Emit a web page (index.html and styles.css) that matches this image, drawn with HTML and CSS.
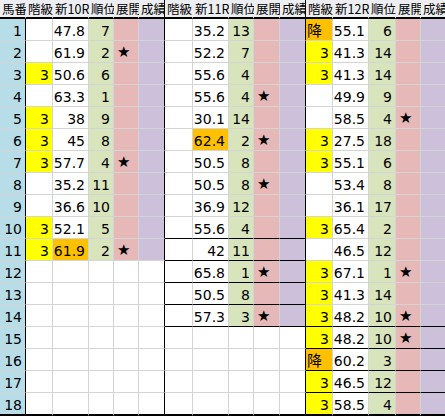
FILE: index.html
```html
<!DOCTYPE html>
<html lang="ja">
<head>
<meta charset="utf-8">
<title>新R</title>
<link rel="stylesheet" href="styles.css">
</head>
<body>
<div class="sheet">
  <div class="c h">馬番</div>
  <div class="c h">階級</div><div class="c h">新10R</div><div class="c h">順位</div><div class="c h">展開</div><div class="c h e">成績</div>
  <div class="c h">階級</div><div class="c h">新11R</div><div class="c h">順位</div><div class="c h">展開</div><div class="c h e">成績</div>
  <div class="c h">階級</div><div class="c h">新12R</div><div class="c h">順位</div><div class="c h">展開</div><div class="c h e">成績</div>

  <div class="c n">1</div>
  <div class="c"></div><div class="c">47.8</div><div class="c g">7</div><div class="c p"></div><div class="c v e"></div>
  <div class="c"></div><div class="c">35.2</div><div class="c g">13</div><div class="c p"></div><div class="c v e"></div>
  <div class="c o l">降</div><div class="c">55.1</div><div class="c g">6</div><div class="c p"></div><div class="c v e"></div>

  <div class="c n">2</div>
  <div class="c"></div><div class="c">61.9</div><div class="c g">2</div><div class="c p s">★</div><div class="c v e"></div>
  <div class="c"></div><div class="c">52.2</div><div class="c g">7</div><div class="c p"></div><div class="c v e"></div>
  <div class="c y">3</div><div class="c">41.3</div><div class="c g">14</div><div class="c p"></div><div class="c v e"></div>

  <div class="c n">3</div>
  <div class="c y">3</div><div class="c">50.6</div><div class="c g">6</div><div class="c p"></div><div class="c v e"></div>
  <div class="c"></div><div class="c">55.6</div><div class="c g">4</div><div class="c p"></div><div class="c v e"></div>
  <div class="c y">3</div><div class="c">41.3</div><div class="c g">14</div><div class="c p"></div><div class="c v e"></div>

  <div class="c n">4</div>
  <div class="c"></div><div class="c">63.3</div><div class="c g">1</div><div class="c p"></div><div class="c v e"></div>
  <div class="c"></div><div class="c">55.6</div><div class="c g">4</div><div class="c p s">★</div><div class="c v e"></div>
  <div class="c"></div><div class="c">49.9</div><div class="c g">9</div><div class="c p"></div><div class="c v e"></div>

  <div class="c n">5</div>
  <div class="c y">3</div><div class="c">38</div><div class="c g">9</div><div class="c p"></div><div class="c v e"></div>
  <div class="c"></div><div class="c">30.1</div><div class="c g">14</div><div class="c p"></div><div class="c v e"></div>
  <div class="c"></div><div class="c">58.5</div><div class="c g">4</div><div class="c p s">★</div><div class="c v e"></div>

  <div class="c n">6</div>
  <div class="c y">3</div><div class="c">45</div><div class="c g">8</div><div class="c p"></div><div class="c v e"></div>
  <div class="c"></div><div class="c o">62.4</div><div class="c g">2</div><div class="c p s">★</div><div class="c v e"></div>
  <div class="c y">3</div><div class="c">27.5</div><div class="c g">18</div><div class="c p"></div><div class="c v e"></div>

  <div class="c n">7</div>
  <div class="c y">3</div><div class="c">57.7</div><div class="c g">4</div><div class="c p s">★</div><div class="c v e"></div>
  <div class="c"></div><div class="c">50.5</div><div class="c g">8</div><div class="c p"></div><div class="c v e"></div>
  <div class="c y">3</div><div class="c">55.1</div><div class="c g">6</div><div class="c p"></div><div class="c v e"></div>

  <div class="c n">8</div>
  <div class="c"></div><div class="c">35.2</div><div class="c g">11</div><div class="c p"></div><div class="c v e"></div>
  <div class="c"></div><div class="c">50.5</div><div class="c g">8</div><div class="c p s">★</div><div class="c v e"></div>
  <div class="c"></div><div class="c">53.4</div><div class="c g">8</div><div class="c p"></div><div class="c v e"></div>

  <div class="c n">9</div>
  <div class="c"></div><div class="c">36.6</div><div class="c g">10</div><div class="c p"></div><div class="c v e"></div>
  <div class="c"></div><div class="c">36.9</div><div class="c g">12</div><div class="c p"></div><div class="c v e"></div>
  <div class="c"></div><div class="c">36.1</div><div class="c g">17</div><div class="c p"></div><div class="c v e"></div>

  <div class="c n">10</div>
  <div class="c y">3</div><div class="c">52.1</div><div class="c g">5</div><div class="c p"></div><div class="c v e"></div>
  <div class="c k"></div><div class="c k">55.6</div><div class="c g k">4</div><div class="c p k"></div><div class="c v e k"></div>
  <div class="c y">3</div><div class="c">65.4</div><div class="c g">2</div><div class="c p"></div><div class="c v e"></div>

  <div class="c n">11</div>
  <div class="c y">3</div><div class="c o">61.9</div><div class="c g">2</div><div class="c p s">★</div><div class="c v e"></div>
  <div class="c k"></div><div class="c k">42</div><div class="c g k">11</div><div class="c p k"></div><div class="c v e k"></div>
  <div class="c"></div><div class="c">46.5</div><div class="c g">12</div><div class="c p"></div><div class="c v e"></div>

  <div class="c n">12</div>
  <div class="c"></div><div class="c"></div><div class="c"></div><div class="c"></div><div class="c e"></div>
  <div class="c k"></div><div class="c k">65.8</div><div class="c g k">1</div><div class="c p s k">★</div><div class="c v e k"></div>
  <div class="c y">3</div><div class="c">67.1</div><div class="c g">1</div><div class="c p s">★</div><div class="c v e"></div>

  <div class="c n">13</div>
  <div class="c"></div><div class="c"></div><div class="c"></div><div class="c"></div><div class="c e"></div>
  <div class="c k"></div><div class="c k">50.5</div><div class="c g k">8</div><div class="c p k"></div><div class="c v e k"></div>
  <div class="c y">3</div><div class="c">41.3</div><div class="c g">14</div><div class="c p"></div><div class="c v e"></div>

  <div class="c n">14</div>
  <div class="c"></div><div class="c"></div><div class="c"></div><div class="c"></div><div class="c e"></div>
  <div class="c k"></div><div class="c k">57.3</div><div class="c g k">3</div><div class="c p s k">★</div><div class="c v e k"></div>
  <div class="c y k">3</div><div class="c k">48.2</div><div class="c g k">10</div><div class="c p s k">★</div><div class="c v e k"></div>

  <div class="c n">15</div>
  <div class="c"></div><div class="c"></div><div class="c"></div><div class="c"></div><div class="c e"></div>
  <div class="c"></div><div class="c"></div><div class="c"></div><div class="c"></div><div class="c e"></div>
  <div class="c y k">3</div><div class="c k">48.2</div><div class="c g k">10</div><div class="c p s k">★</div><div class="c v e k"></div>

  <div class="c n">16</div>
  <div class="c"></div><div class="c"></div><div class="c"></div><div class="c"></div><div class="c e"></div>
  <div class="c"></div><div class="c"></div><div class="c"></div><div class="c"></div><div class="c e"></div>
  <div class="c o l k">降</div><div class="c k">60.2</div><div class="c g k">3</div><div class="c p k"></div><div class="c v e k"></div>

  <div class="c n">17</div>
  <div class="c"></div><div class="c"></div><div class="c"></div><div class="c"></div><div class="c e"></div>
  <div class="c"></div><div class="c"></div><div class="c"></div><div class="c"></div><div class="c e"></div>
  <div class="c y k">3</div><div class="c k">46.5</div><div class="c g k">12</div><div class="c p k"></div><div class="c v e k"></div>

  <div class="c n b">18</div>
  <div class="c b"></div><div class="c b"></div><div class="c b"></div><div class="c b"></div><div class="c e b"></div>
  <div class="c b"></div><div class="c b"></div><div class="c b"></div><div class="c b"></div><div class="c e b"></div>
  <div class="c y b">3</div><div class="c b">58.5</div><div class="c g b">4</div><div class="c p b"></div><div class="c v e b"></div>
</div>
</body>
</html>
```

FILE: styles.css
```css
html, body {
  margin: 0;
  padding: 0;
  background: #ffffff;
}

.sheet {
  display: grid;
  grid-template-columns: 26px 27px 36px 25px 25px 26px 28px 36px 25px 26px 26px 27px 36px 27px 25px 25px;
  grid-template-rows: 19px repeat(17, 22px) 23px;
  width: 446px;
  font-family: "DejaVu Sans", "Noto Sans CJK JP", sans-serif;
  font-size: 14px;
  color: #000000;
}

.c {
  box-sizing: border-box;
  border-right: 1px solid #d4d4d4;
  border-bottom: 1px solid #d4d4d4;
  padding: 3px 3px 0 0;
  line-height: 18px;
  text-align: right;
  white-space: nowrap;
  overflow: hidden;
  background: #ffffff;
}

.h {
  background: #eceef2;
  border-right-color: #eceef2;
  border-bottom: 2px solid #000000;
  font-family: "Noto Sans CJK JP", sans-serif;
  font-size: 12.5px;
  line-height: 17px;
  padding: 0 0 0 2px;
  text-align: left;
  overflow: visible;
}

.n {
  background: #b7dee8;
  border-right-color: #000000;
}

.e { border-right-color: #000000; }
.k { border-bottom-color: #000000; }
.b { border-bottom: 2px solid #000000; }

.y { background: #ffff00; }
.o { background: #ffc000; }
.g { background: #d8e4bc; }
.p { background: #e6b8b7; }
.v { background: #ccc0da; }

.l {
  text-align: left;
  padding-left: 1px;
  font-family: "Noto Sans CJK JP", sans-serif;
  font-size: 15px;
  padding-top: 0;
  line-height: 21px;
}

.s {
  text-align: left;
  padding-left: 3px;
  padding-top: 2px;
  font-size: 15px;
}
```
